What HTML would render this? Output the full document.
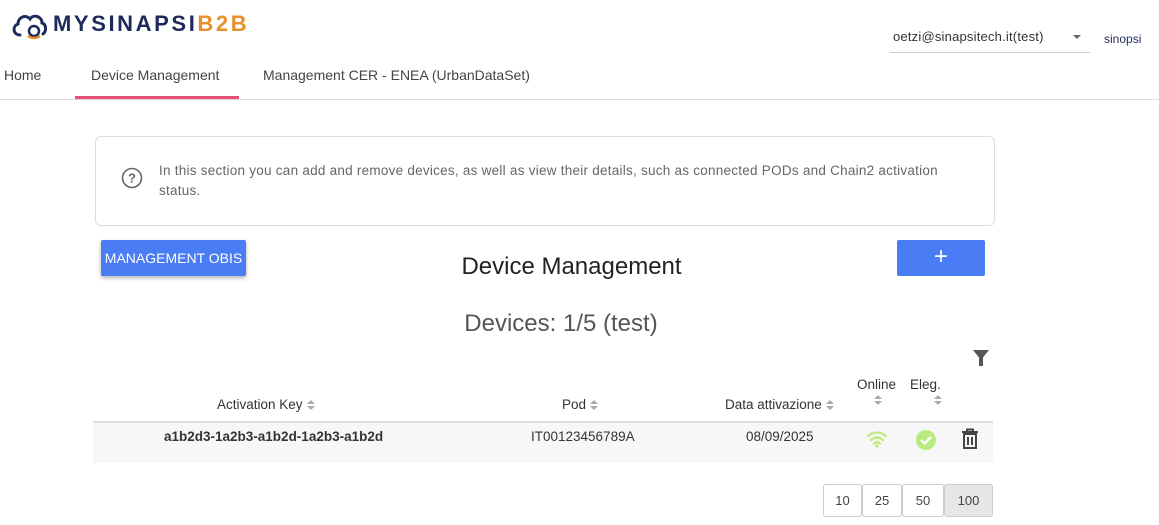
<!DOCTYPE html>
<html><head><meta charset="utf-8"><style>
*{box-sizing:border-box;margin:0;padding:0}
body{width:1159px;height:525px;overflow:hidden;background:#fff;font-family:"Liberation Sans",sans-serif;color:#333;position:relative}
.abs{position:absolute}
.nav a{position:absolute;top:67px;font-size:14px;color:#444}
.sort{display:inline-block;vertical-align:middle;margin-left:4px;width:8px;height:10px;position:relative}
.sort:before{content:"";position:absolute;left:0;top:0;border:4px solid transparent;border-bottom:4px solid #aaa;border-top:0}
.sort:after{content:"";position:absolute;left:0;top:6px;border:4px solid transparent;border-top:4px solid #aaa;border-bottom:0}
.pg{position:absolute;top:484px;height:33px;border:1px solid #ccc;border-radius:3px;font-size:13px;color:#444;text-align:center;line-height:31px}
</style></head><body>
<div class="abs" style="left:10px;top:8px;width:240px;height:32px">
<svg width="40" height="32" viewBox="0 0 40 32" class="abs" style="left:0;top:0"><path d="M10 27 C3 27 2 18 8 16 C8 9 16 6 20 11 C23 6 32 8 32 15 C36 16 37 23 33 26" fill="none" stroke="#1f2a5c" stroke-width="3" stroke-linecap="round"/><circle cx="24" cy="23" r="5" fill="none" stroke="#1f2a5c" stroke-width="2.5"/><path d="M18 28 Q24 32 30 28" fill="none" stroke="#e8902c" stroke-width="2.5"/></svg>
<span class="abs" style="left:43px;top:3px;font-size:22px;font-weight:bold;letter-spacing:2.6px;color:#1f2a5c">MYSINAPSI<span style="color:#e8902c">B2B</span></span>
</div>
<div class="abs" style="left:893px;top:29px;font-size:13px;letter-spacing:0.2px;color:#333">oetzi@sinapsitech.it(test)</div>
<div class="abs" style="left:1073px;top:35px;border:4px solid transparent;border-top:4px solid #666"></div>
<div class="abs" style="left:890px;top:52px;width:200px;height:1px;background:#ccc"></div>
<div class="abs" style="left:1104px;top:32px;font-size:12px;color:#1f2a5c">sinopsi</div>
<div class="nav"><a style="left:4px">Home</a><a style="left:91px">Device Management</a><a style="left:263px">Management CER - ENEA (UrbanDataSet)</a></div>
<div class="abs" style="left:75px;top:96px;width:164px;height:3px;background:#e8507a"></div>
<div class="abs" style="left:0;top:99px;width:1159px;height:1px;background:#ddd"></div>
<div class="abs" style="left:95px;top:136px;width:900px;height:90px;border:1px solid #ddd;border-radius:6px"></div>
<svg class="abs" style="left:121px;top:167px" width="22" height="22" viewBox="0 0 22 22"><circle cx="11" cy="11" r="9.5" fill="none" stroke="#666" stroke-width="1.6"/><text x="11" y="15.5" text-anchor="middle" font-size="13" font-weight="bold" fill="#666" font-family="Liberation Sans">?</text></svg>
<div class="abs" style="left:159px;top:161px;width:820px;font-size:13.5px;letter-spacing:0.25px;line-height:20px;color:#666">In this section you can add and remove devices, as well as view their details, such as connected PODs and Chain2 activation status.</div>
<div class="abs" style="left:101px;top:240px;width:145px;height:36px;background:#4a7cf6;border-radius:2px;box-shadow:0 2px 4px rgba(0,0,0,.3);color:#fff;font-size:14px;line-height:36px;text-align:center">MANAGEMENT OBIS</div>
<div class="abs" style="left:897px;top:240px;width:88px;height:36px;background:#4a7cf6;border-radius:2px;color:#fff;font-size:24px;line-height:34px;text-align:center">+</div>
<div class="abs" style="left:0;width:1143px;top:253px;text-align:center;font-size:24px;color:#222">Device Management</div>
<div class="abs" style="left:0;width:1122px;top:310px;text-align:center;font-size:24px;color:#555">Devices: 1/5 (test)</div>
<svg class="abs" style="left:972px;top:349px" width="18" height="18" viewBox="0 0 18 18"><path d="M1 1H17L11 8.5V17H7V8.5Z" fill="#555"/></svg>
<div class="abs" style="left:217px;top:397px;font-size:13.5px;color:#333">Activation Key<span class="sort"></span></div>
<div class="abs" style="left:562px;top:397px;font-size:13.5px;color:#333">Pod<span class="sort"></span></div>
<div class="abs" style="left:725px;top:397px;font-size:13.5px;color:#333">Data attivazione<span class="sort"></span></div>
<div class="abs" style="left:857px;top:377px;font-size:13.5px;color:#333">Online</div>
<div class="abs" style="left:910px;top:377px;font-size:13.5px;color:#333">Eleg.</div>
<span class="sort abs" style="left:874px;top:391px;margin:0"></span>
<span class="sort abs" style="left:922px;top:391px;margin:0"></span>
<div class="abs" style="left:93px;top:421px;width:900px;height:2px;background:#ddd"></div>
<div class="abs" style="left:93px;top:423px;width:900px;height:40px;background:#f7f7f7"></div>
<div class="abs" style="left:164px;top:429px;font-size:13.5px;font-weight:bold;color:#333">a1b2d3-1a2b3-a1b2d-1a2b3-a1b2d</div>
<div class="abs" style="left:531px;top:429px;font-size:13.5px;color:#333">IT00123456789A</div>
<div class="abs" style="left:746px;top:429px;font-size:13.5px;color:#333">08/09/2025</div>
<svg class="abs" style="left:866px;top:430px" width="22" height="18" viewBox="0 0 22 18"><path d="M2 6Q11 -1 20 6M5 10Q11 5 17 10M8 13.5Q11 11 14 13.5" fill="none" stroke="#b9ec80" stroke-width="2.3" stroke-linecap="round"/><circle cx="11" cy="16" r="1.6" fill="#b9ec80"/></svg>
<svg class="abs" style="left:915px;top:429px" width="22" height="22" viewBox="0 0 22 22"><circle cx="11" cy="11" r="10" fill="#b9ec80"/><path d="M6 11L9.5 14.5L16 8" fill="none" stroke="#fff" stroke-width="2.3"/></svg>
<svg class="abs" style="left:961px;top:428px" width="18" height="22" viewBox="0 0 18 22"><path d="M1 4H17M6 4V1.5H12V4" fill="none" stroke="#444" stroke-width="2"/><rect x="3" y="6" width="12" height="14" fill="none" stroke="#444" stroke-width="2"/><path d="M7 9V17M11 9V17" stroke="#444" stroke-width="2"/></svg>
<div class="pg" style="left:823px;width:39px">10</div>
<div class="pg" style="left:862px;width:40px">25</div>
<div class="pg" style="left:902px;width:42px">50</div>
<div class="pg" style="left:944px;width:49px;background:#e6e6e6">100</div>
</body></html>
